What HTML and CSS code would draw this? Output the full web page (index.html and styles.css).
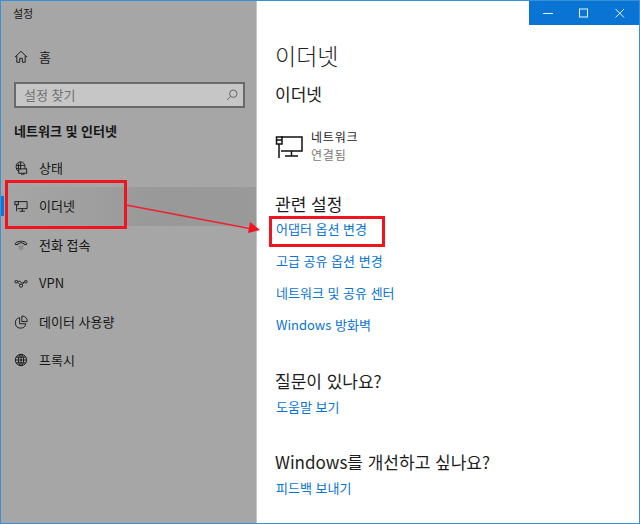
FILE: index.html
```html
<!DOCTYPE html>
<html lang="ko">
<head>
<meta charset="utf-8">
<title>설정</title>
<link rel="stylesheet" href="styles.css">
</head>
<body>
<div class="window">
  <aside class="sidebar">
    <div class="app-title">설정</div>
    <div class="nav-row home">
      <svg class="ico" viewBox="0 0 16 16"><path d="M1 8.200 8 1.500l7 6.700M3.200 6.500V14h3.300V9.500h3V14h3.300V6.500"/></svg>
      <span>홈</span>
    </div>
    <div class="search">
      <span>설정 찾기</span>
      <svg class="search-ico" viewBox="0 0 12 12"><circle cx="7.300" cy="4.700" r="3.700"/><path d="M4.600 7.400 1 11"/></svg>
    </div>
    <div class="section">네트워크 및 인터넷</div>
    <nav class="nav">
      <div class="nav-row">
        <svg class="ico" viewBox="0 0 16 16"><path d="M12.500 9V6A5 5 0 0 0 2.500 6v1.500a5 5 0 0 0 3 4.500M2.600 5h10M7.500 1v9M5 3v6M2.600 8.500h3"/><rect x="5.500" y="9" width="9" height="5"/><path d="M8 15h4"/></svg>
        <span>상태</span>
      </div>
      <div class="nav-row active">
        <svg class="ico" viewBox="0 0 16 16"><path d="M4 3h11v8H4M9.500 11v3M6.500 14h6M3 6v8"/><rect x="1" y="3" width="4" height="3.500"/></svg>
        <span>이더넷</span>
      </div>
      <div class="nav-row">
        <svg class="ico" viewBox="0 0 16 16"><path d="M1.500 7.500V6C3 3 13 3 14.500 6v1.500h-3V6.200c-2-.7-5-.7-7 0v1.300z"/><path class="dots" d="M5.500 9.500h1M7.500 9.500h1M9.500 9.500h1M5.500 11.500h1M7.500 11.500h1M9.500 11.500h1M7.500 13.500h1"/></svg>
        <span>전화 접속</span>
      </div>
      <div class="nav-row">
        <svg class="ico" viewBox="0 0 16 16"><circle cx="2.500" cy="6.500" r="1.500"/><circle cx="13.500" cy="6.500" r="1.500"/><circle cx="8" cy="11" r="1.800"/><path d="M4 6.500c1.500 1.500 2 3 3 3.200M12 6.500c-1 1-1.800 2-2.500 3.300M4 6.800c2-1.800 3-.8 4 .2s2.500 1.500 4-.5"/></svg>
        <span>VPN</span>
      </div>
      <div class="nav-row">
        <svg class="ico" viewBox="0 0 16 16"><path d="M6.500 3.100A6 6 0 1 0 13.500 10H6.500z"/><path d="M9 1.200h.5A5.500 5.500 0 0 1 15 7.500H9z"/></svg>
        <span>데이터 사용량</span>
      </div>
      <div class="nav-row">
        <svg class="ico" viewBox="0 0 16 16"><circle cx="8" cy="8" r="6.500"/><ellipse cx="8" cy="8" rx="3" ry="6.500"/><path d="M8 1.500v13M1.500 8h13M2.500 4.800h11M2.500 11.200h11"/></svg>
        <span>프록시</span>
      </div>
    </nav>
  </aside>
  <main class="main">
    <div class="titlebar">
      <svg class="cap" viewBox="0 0 10 10"><path d="M0 5.500h10"/></svg>
      <svg class="cap" viewBox="0 0 10 10"><rect x=".5" y="1" width="8" height="8"/></svg>
      <svg class="cap" viewBox="0 0 10 10"><path d="M.5 1l8.500 8.500M9 1 .5 9.500"/></svg>
    </div>
    <div class="content">
      <h1>이더넷</h1>
      <h2 class="sub">이더넷</h2>
      <div class="network">
        <svg class="net-ico" viewBox="0 0 28 24"><path d="M6 2h21v14H6M16.500 16v5M10 21h13M4 9v14"/><rect x="1.500" y="2" width="5.500" height="7"/><path d="M1.500 5h5.500"/></svg>
        <div class="net-text">
          <div class="net-name">네트워크</div>
          <div class="net-state">연결됨</div>
        </div>
      </div>
      <h2 class="related">관련 설정</h2>
      <ul class="links">
        <li>어댑터 옵션 변경</li>
        <li>고급 공유 옵션 변경</li>
        <li>네트워크 및 공유 센터</li>
        <li>Windows 방화벽</li>
      </ul>
      <h2 class="ask">질문이 있나요?</h2>
      <a class="link">도움말 보기</a>
      <h2 class="ask second">Windows를 개선하고 싶나요?</h2>
      <a class="link">피드백 보내기</a>
    </div>
  </main>
  <div class="mark mark-a"></div>
  <div class="mark mark-b"></div>
  <svg class="arrow" viewBox="0 0 640 524"><path d="M126 205 252 229"/><polygon points="260,230 250,222 248,233"/></svg>
</div>
</body>
</html>
```
FILE: styles.css
```css
* { box-sizing: border-box; }
html, body { margin: 0; height: 100%; }
body {
  font-family: "Noto Sans CJK KR", "Noto Sans", sans-serif;
  font-size: 13px;
  color: #1a1a1a;
  background: #fff;
}
.window {
  position: relative;
  width: 640px;
  height: 524px;
  display: flex;
  border: 1px solid #3a8fd9;
  overflow: hidden;
}
.sidebar {
  width: 256px;
  flex: none;
  background: #a6a6a6;
  border-right: 1px solid #c4c4c4;
  display: flex;
  flex-direction: column;
  color: #161616;
}
.app-title {
  font-size: 11px;
  line-height: 16px;
  margin: 4px 0 0 12px;
}
.nav-row {
  display: flex;
  align-items: center;
  gap: 11px;
  height: 38.500px;
  padding-left: 13px;
  line-height: 18px;
}
.nav-row.home { margin-top: 17px; }
.ico {
  width: 14px;
  height: 14px;
  flex: none;
  fill: none;
  stroke: #1c1c1c;
  stroke-width: 1.100;
}
.ico .dots { stroke-width: 1; stroke: #444; }
.search {
  height: 26px;
  margin: 5px 11px 0 13px;
  border: 2px solid #6a6a6a;
  background: #c6c6c6;
  color: #707070;
  display: flex;
  align-items: center;
  justify-content: space-between;
  padding: 0 5px 0 8px;
}
.search-ico {
  width: 12px;
  height: 12px;
  fill: none;
  stroke: #666;
  stroke-width: 1;
}
.section {
  font-weight: 700;
  font-size: 13px;
  line-height: 18px;
  margin: 14px 0 0 13px;
}
.nav { margin-top: 9px; }
.nav-row.active {
  position: relative;
  background: linear-gradient(90deg, #a6a6a6 0%, #989898 65%, #9a9a9a 100%);
}
.nav-row.active::before {
  content: "";
  position: absolute;
  left: 0;
  top: 9px;
  width: 3px;
  height: 20px;
  background: #0a78d7;
}
.main {
  flex: 1;
  min-width: 0;
  background: #fff;
  display: flex;
  flex-direction: column;
}
.titlebar {
  align-self: flex-end;
  width: 110px;
  height: 24px;
  background: #0a74d4;
  display: flex;
  align-items: center;
  justify-content: space-around;
  padding: 0 1px;
  flex: none;
}
.cap {
  width: 10px;
  height: 10px;
  fill: none;
  stroke: #e8f2fb;
  stroke-width: 1;
}
.content {
  padding: 0 0 0 18px;
  display: flex;
  flex-direction: column;
  align-items: flex-start;
}
h1 {
  font-size: 23px;
  font-weight: 300;
  line-height: 30px;
  margin: 15px 0 0;
  color: #222;
}
h2 {
  font-size: 17px;
  font-weight: 400;
  line-height: 22px;
  margin: 0;
  color: #1c1c1c;
}
.sub { margin-top: 13px; }
.network {
  display: flex;
  align-items: center;
  gap: 8px;
  margin-top: 24px;
}
.net-ico {
  width: 28px;
  height: 24px;
  fill: none;
  stroke: #111;
  stroke-width: 1.500;
  margin-top: 1px;
}
.net-name, .net-state { font-size: 12px; line-height: 18px; letter-spacing: .8px; }
.net-text { margin-top: -1px; }
.net-state { color: #777; }
.related { margin-top: 29px; }
.links {
  list-style: none;
  margin: 3px 0 0 1px;
  padding: 0;
  color: #0a74d0;
}
.links li { height: 32px; line-height: 20px; padding-top: 1px; }
.link { color: #0a74d0; line-height: 20px; margin: 5px 0 0 1px; display: block; }
.ask { margin-top: 24px; }
.ask.second { margin-top: 34px; }
.mark {
  position: absolute;
  border: 3px solid #ee1520;
}
.mark-a { left: 4px; top: 179px; width: 122px; height: 49px; }
.mark-b { left: 268px; top: 215px; width: 116px; height: 31px; }
.arrow {
  position: absolute;
  left: -1px;
  top: -1px;
  width: 640px;
  height: 524px;
  pointer-events: none;
}
.arrow path { stroke: #ee2030; stroke-width: 1.500; fill: none; }
.arrow polygon { fill: #ee1520; }
```
